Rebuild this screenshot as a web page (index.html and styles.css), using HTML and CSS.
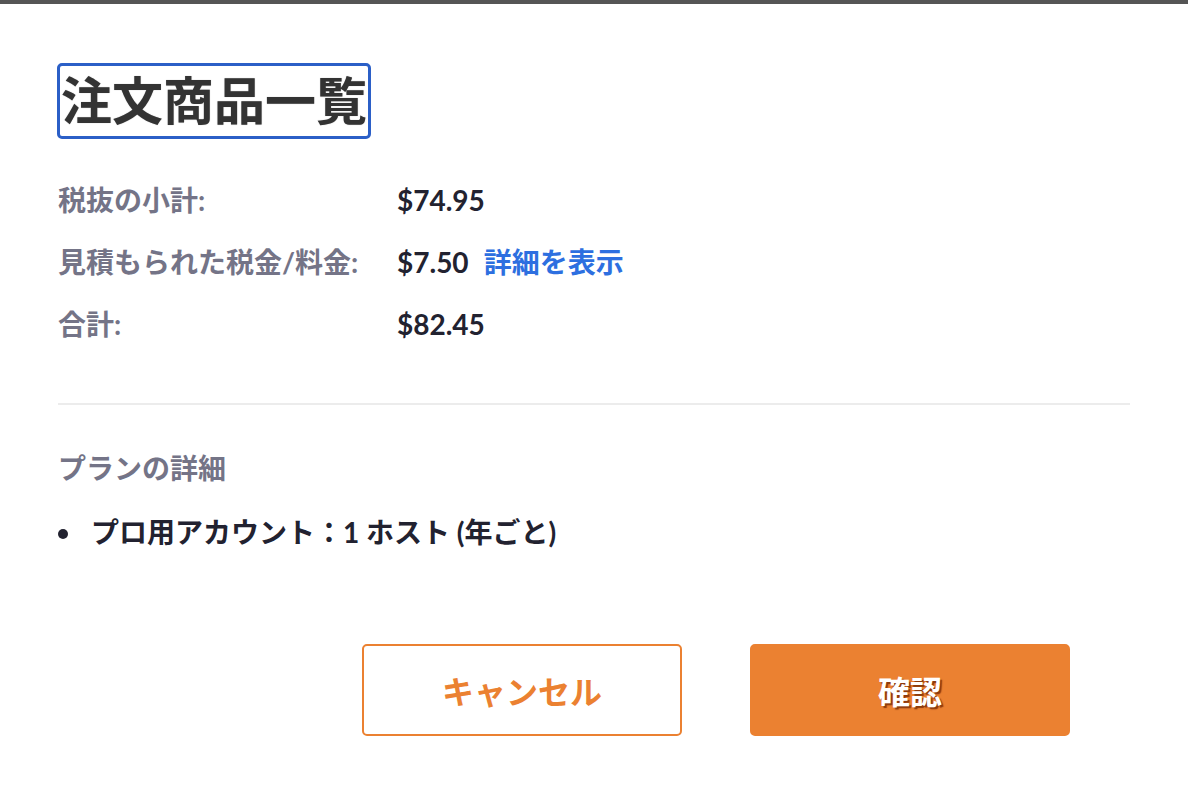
FILE: index.html
```html
<!DOCTYPE html>
<html lang="ja">
<head>
<meta charset="utf-8">
<title>注文商品一覧</title>
<link rel="stylesheet" href="styles.css">
</head>
<body>
<div class="topbar"></div>
<main class="page">
  <h1 class="title">注文商品一覧</h1>
  <dl class="summary">
    <dt>税抜の小計:</dt>
    <dd>$74.95</dd>
    <dt>見積もられた税金/料金:</dt>
    <dd>$7.50<a class="link" href="#">詳細を表示</a></dd>
    <dt>合計:</dt>
    <dd>$82.45</dd>
  </dl>
  <hr class="divider">
  <h2 class="plan-title">プランの詳細</h2>
  <ul class="plan-list">
    <li>プロ用アカウント：1 ホスト (年ごと)</li>
  </ul>
  <div class="actions">
    <button class="btn btn-outline" type="button">キャンセル</button>
    <button class="btn btn-primary" type="button">確認</button>
  </div>
</main>
</body>
</html>
```
FILE: styles.css
```css
html, body {
  margin: 0;
  padding: 0;
  background: #ffffff;
}

body {
  font-family: Lato, "Noto Sans CJK JP", sans-serif;
  color: #222230;
}

.topbar {
  height: 4px;
  background: #555555;
}

.page {
  padding: 59px 58px 0 58px;
}

.title {
  display: inline-block;
  margin: 0 0 0 -1px;
  padding: 0 1px;
  font-size: 51px;
  line-height: 70px;
  font-weight: 700;
  color: #333333;
  border: 3px solid #2b5fc7;
  border-radius: 5px;
  text-shadow: 0 0 1px rgba(0, 0, 0, 0.35);
}

.summary {
  display: grid;
  grid-template-columns: 339px auto;
  row-gap: 20px;
  margin: 40px 0 0 0;
  font-size: 28px;
  line-height: 42px;
  font-weight: 700;
}

.summary dt {
  color: #747487;
}

.summary dd {
  margin: 0;
  color: #222230;
}

.link {
  margin-left: 15px;
  color: #2d6fe0;
  text-decoration: none;
}

.divider {
  margin: 58px 0 0 0;
  border: 0;
  height: 2px;
  background: #ececec;
}

.plan-title {
  margin: 42px 0 0 0;
  font-size: 28px;
  line-height: 42px;
  font-weight: 700;
  color: #747487;
}

.plan-list {
  list-style: none;
  margin: 22px 0 0 0;
  padding: 0;
}

.plan-list li {
  display: flex;
  align-items: center;
  font-size: 28px;
  line-height: 42px;
  font-weight: 700;
  color: #222230;
}

.plan-list li::before {
  content: "";
  width: 10px;
  height: 10px;
  border-radius: 50%;
  background: #222230;
  margin: 4px 23px 0 0;
}

.actions {
  display: flex;
  justify-content: flex-end;
  gap: 68px;
  margin: 91px 60px 0 0;
}

.btn {
  width: 320px;
  height: 92px;
  border-radius: 5px;
  font-family: Lato, "Noto Sans CJK JP", sans-serif;
  font-size: 32px;
  font-weight: 700;
  cursor: pointer;
}

.btn-outline {
  background: #ffffff;
  border: 2px solid #eb8131;
  color: #eb8131;
}

.btn-primary {
  background: #eb8131;
  border: 2px solid #eb8131;
  color: #ffffff;
  text-shadow: 2px 2px 1px rgba(110, 35, 0, 0.75);
}
```
